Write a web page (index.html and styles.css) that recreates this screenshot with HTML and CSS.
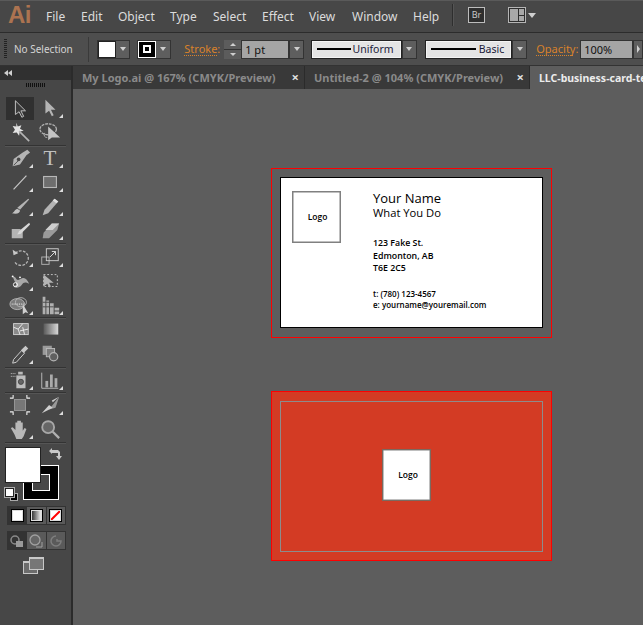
FILE: index.html
```html
<!DOCTYPE html>
<html lang="en">
<head>
<meta charset="utf-8">
<title>Adobe Illustrator</title>
<link rel="stylesheet" href="styles.css">
</head>
<body>
<div class="app">
  <header class="menubar">
    <span class="ai-logo">Ai</span>
    <nav class="menu">
      <span class="m-file">File</span><span class="m-edit">Edit</span><span class="m-object">Object</span><span class="m-type">Type</span><span class="m-select">Select</span><span class="m-effect">Effect</span><span class="m-view">View</span><span class="m-window">Window</span><span class="m-help">Help</span>
    </nav>
    <span class="menu-sep"></span>
    <span class="br-btn">Br</span>
    <span class="ws-btn"><span class="ws-left"></span><span class="ws-right"><i></i><i></i></span></span>
    <span class="tri tri-ws"></span>
  </header>

  <div class="controlbar">
    <span class="grip-v"></span>
    <span class="no-sel">No Selection</span>
    <span class="ctl-sep"></span>
    <span class="swatch-combo combo-fill"><span class="sw-fill"></span><span class="drop"><span class="tri"></span></span></span>
    <span class="swatch-combo combo-stroke"><span class="sw-stroke"><i></i></span><span class="drop"><span class="tri"></span></span></span>
    <span class="link-label lbl-stroke">Stroke:</span>
    <span class="spinner"><span class="spin"><span class="tri tri-up"></span></span><span class="spin"><span class="tri"></span></span></span>
    <span class="field field-pt">1 pt</span><span class="drop drop-pt"><span class="tri"></span></span>
    <span class="profile prof-uniform"><span class="line"></span><span>Uniform</span></span><span class="drop drop-p"><span class="tri"></span></span>
    <span class="profile prof-basic"><span class="line"></span><span>Basic</span></span><span class="drop drop-p drop-last"><span class="tri"></span></span>
    <span class="link-label lbl-opacity">Opacity:</span>
    <span class="field field-op">100%</span><span class="drop drop-op"><span class="tri tri-right"></span></span>
  </div>

  <div class="workspace">
    <aside class="toolbox">
      <div class="tb-head"><svg class="collapse" viewBox="0 0 8 6"><path d="M4 0v6L0 3zM8 0v6L4 3z" fill="#cfcfcf"/></svg></div>
      <div class="tb-grip"></div>
      <div class="tools">
        <div class="tool active"><svg viewBox="0 0 24 24"><path d="M7 3v15l4-3 3 6 2-1-3-6h5z" fill="#3a3a3a" stroke="#c8c8c8"/></svg></div>
        <div class="tool fly"><svg viewBox="0 0 24 24"><path d="M7 3v15l4-3 3 6 2-1-3-6h5z" fill="#b4b4b4"/></svg></div>
        <div class="tool"><svg viewBox="0 0 24 24"><path d="M8 2l1.500 4 4-1.500-1.500 4 4 2-4.300 1L11 16l-2.500-3.500-4.500.5 2.500-3.500L4 5.500l4 .5z" fill="#e4e4e4"/><path d="M11 11l11 11" stroke="#b4b4b4" stroke-width="1.800"/></svg></div>
        <div class="tool"><svg viewBox="0 0 24 24"><ellipse cx="10" cy="9" rx="9" ry="6" fill="none" stroke="#b4b4b4" stroke-width="1.400" stroke-dasharray="3 1"/><path d="M9 18c-3 0-4-2-3-5" stroke="#b4b4b4" fill="none"/><path d="M10 6v15l4-3 9 0z" fill="#c4c4c4"/></svg></div>
        <div class="tb-sep"></div>
        <div class="tool fly"><svg viewBox="0 0 24 24"><path d="M20 3l3 3-4 3-7 10-8 2 1-8 10-7z" fill="#b4b4b4"/><circle cx="10.500" cy="13.500" r="2" fill="#474747"/><path d="M5 20l5-5" stroke="#474747"/></svg></div>
        <div class="tool fly"><span class="t-glyph">T</span></div>
        <div class="tool fly"><svg viewBox="0 0 24 24"><path d="M5 20L19 5" stroke="#c8c8c8" stroke-width="1.300"/></svg></div>
        <div class="tool fly"><svg viewBox="0 0 24 24"><rect x="5" y="6" width="14" height="12" fill="#6e6e6e" stroke="#b8b8b8" stroke-width="1.200"/></svg></div>
        <div class="tool fly"><svg viewBox="0 0 24 24"><path d="M21 4l1 1-10 11-3-2z" fill="#b4b4b4"/><path d="M9 15l3 2c0 3-3 4-9 3 3-1 3-4 6-5z" fill="#c0c0c0"/></svg></div>
        <div class="tool fly"><svg viewBox="0 0 24 24"><path d="M17 4l4 3-11 13-6 2 2-6z" fill="#b4b4b4"/><path d="M17 4l4 3-2 2-4-3z" fill="#e0e0e0"/></svg></div>
        <div class="tool"><svg viewBox="0 0 24 24"><path d="M3 11h10l-3 5 5-3v8H3z" fill="#b4b4b4"/><path d="M22 4L11 13l-2 4 4-1L23 6z" fill="#d8d8d8"/></svg></div>
        <div class="tool fly"><svg viewBox="0 0 24 24"><path d="M14 5h8l-2 7-9 9H4l1-6z" fill="#9a9a9a"/><path d="M14 5h8l-7 7H7z" fill="#d0d0d0"/></svg></div>
        <div class="tb-sep"></div>
        <div class="tool fly"><svg viewBox="0 0 24 24"><path d="M7 8a8 8 0 1 1-1 9" fill="none" stroke="#b4b4b4" stroke-width="1.400" stroke-dasharray="3 1.500"/><path d="M4 4l1 6 5-2z" fill="#c8c8c8"/></svg></div>
        <div class="tool fly"><svg viewBox="0 0 24 24"><rect x="3" y="12" width="8" height="8" fill="none" stroke="#b4b4b4"/><rect x="8" y="3" width="13" height="13" fill="none" stroke="#d0d0d0"/><path d="M12 12l6-6M14 6h4v4" stroke="#e0e0e0" fill="none"/></svg></div>
        <div class="tool fly"><svg viewBox="0 0 24 24"><path d="M4 7c5 0 3 6 8 3 5-3 7-1 10 5-4-2-6-2-8 1-3 4-7 4-9 2 4-1 3-4 1-6z" fill="#a8a8a8"/><circle cx="7" cy="16" r="2.200" fill="none" stroke="#fff"/><circle cx="4" cy="7" r="1" fill="#fff"/><circle cx="12" cy="8" r="1" fill="#fff"/></svg></div>
        <div class="tool"><svg viewBox="0 0 24 24"><rect x="5" y="5" width="15" height="13" fill="none" stroke="#c8c8c8" stroke-dasharray="2 2"/><path d="M5 5v13l4-3 2 4 2-1-2-4h5z" fill="#b4b4b4"/></svg></div>
        <div class="tool fly"><svg viewBox="0 0 24 24"><ellipse cx="9" cy="11" rx="8" ry="6" fill="#7c7c7c" stroke="#b4b4b4"/><ellipse cx="13" cy="9" rx="6" ry="5" fill="none" stroke="#b4b4b4"/><path d="M3 11h14" stroke="#fff" stroke-dasharray="1 1"/><path d="M15 11v11l3-2 3 1z" fill="#d0d0d0"/></svg></div>
        <div class="tool fly"><svg viewBox="0 0 24 24"><path d="M4 3h3v19H4zM8 7h3v15H8zM12 10h4v12h-4zM17 15h5v3h-5zM17 19h5v3h-5z" fill="#b0b0b0"/><path d="M4 9h12M4 14h12" stroke="#474747"/></svg></div>
        <div class="tb-sep"></div>
        <div class="tool"><svg viewBox="0 0 24 24"><rect x="5" y="5" width="16" height="12" fill="#8a8a8a" stroke="#d0d0d0"/><path d="M5 9l5 2 2 6M10 11l5-6M12 13l9-2M15 9l2 8" stroke="#eee" fill="none"/></svg></div>
        <div class="tool"><svg viewBox="0 0 24 24"><defs><linearGradient id="g1"><stop offset="0" stop-color="#5a5a5a"/><stop offset="1" stop-color="#d8d8d8"/></linearGradient></defs><rect x="5" y="5" width="16" height="12" fill="url(#g1)"/></svg></div>
        <div class="tool fly"><svg viewBox="0 0 24 24"><path d="M4 22l1-4 9-10 3 3-9 10z" fill="#474747" stroke="#d8d8d8"/><path d="M13 8l5-5 3 3-5 5z" fill="#c8c8c8"/></svg></div>
        <div class="tool"><svg viewBox="0 0 24 24"><rect x="4" y="3" width="10" height="10" fill="#9a9a9a"/><rect x="8" y="6" width="9" height="9" fill="#7a7a7a" stroke="#bbb"/><circle cx="16" cy="15" r="4.500" fill="#606060" stroke="#b4b4b4" stroke-width="1.300"/></svg></div>
        <div class="tb-sep"></div>
        <div class="tool fly"><svg viewBox="0 0 24 24"><path d="M2 5h6M2 8h6" stroke="#d0d0d0" stroke-dasharray="1 1"/><rect x="10" y="3" width="5" height="3" fill="#bbb"/><rect x="8" y="7" width="10" height="14" fill="#bdbdbd"/><circle cx="13" cy="14" r="2.800" fill="#666" stroke="#444"/></svg></div>
        <div class="tool fly"><svg viewBox="0 0 24 24"><path d="M3 4v17h18" fill="none" stroke="#c0c0c0"/><rect x="7" y="13" width="3" height="7" fill="#aaa"/><rect x="12" y="6" width="3" height="14" fill="#aaa"/><rect x="17" y="10" width="3" height="10" fill="#aaa"/></svg></div>
        <div class="tb-sep"></div>
        <div class="tool"><svg viewBox="0 0 24 24"><rect x="6" y="6" width="12" height="12" fill="#777" stroke="#999"/><path d="M1 4.500h4M19 4.500h4M1 19.500h4M19 19.500h4M4.500 1v3M19.500 1v3M4.500 20v3M19.500 20v3" stroke="#eee" stroke-width="1.200"/></svg></div>
        <div class="tool fly"><svg viewBox="0 0 24 24"><path d="M22 3l-4 12-7 2z" fill="#999"/><path d="M14 7l8-4-7 6z" fill="#ccc"/><path d="M3 21l8-9 4 3z" fill="#d0d0d0"/></svg></div>
        <div class="tool fly"><svg viewBox="0 0 24 24"><path d="M6 18L2 11l2-1 3 3V5h2v6-8h2v8-8h2v8-6h2v9l2-3 2 1-3 8-2 3H8z" fill="#b8b8b8"/></svg></div>
        <div class="tool"><svg viewBox="0 0 24 24"><circle cx="10" cy="10" r="6.500" fill="#666" stroke="#a8a8a8" stroke-width="2"/><path d="M15 15l7 7" stroke="#b0b0b0" stroke-width="2.500"/></svg></div>
        <div class="tb-sep"></div>
      </div>

      <div class="colors">
        <span class="big-stroke"><i></i></span>
        <span class="big-fill"></span>
        <svg class="swap" viewBox="0 0 14 14"><path d="M1 4l3-3v2h6l2 2v4h2l-3 4-3-4h2V6H4v1z" fill="#c8c8c8"/></svg>
        <span class="mini-default"><i></i><b></b></span>
      </div>
      <div class="btn-row">
        <span class="mode on"><span class="m-color"></span></span>
        <span class="mode"><span class="m-grad"></span></span>
        <span class="mode"><span class="m-none"><svg viewBox="0 0 11 11"><path d="M0 11L11 0" stroke="#f00" stroke-width="2"/></svg></span></span>
      </div>
      <div class="btn-row draw-row">
        <span class="mode on"><svg viewBox="0 0 14 14"><circle cx="5" cy="6" r="4" fill="none" stroke="#8a8a8a" stroke-width="1.500"/><rect x="6" y="7" width="7" height="6" fill="#9a9a9a"/></svg></span>
        <span class="mode"><svg viewBox="0 0 14 14"><circle cx="6" cy="6" r="5" fill="#666" stroke="#a0a0a0" stroke-width="1.300"/><path d="M7 13h6V8" stroke="#a0a0a0" fill="none"/></svg></span>
        <span class="mode"><svg viewBox="0 0 14 14"><path d="M7 2a5 5 0 1 0 5 5H8V5" fill="none" stroke="#7e7e7e" stroke-width="1.500"/></svg></span>
      </div>
      <div class="screen-mode"><span class="sm-back"></span><span class="sm-front"></span></div>
    </aside>

    <main class="doc">
      <div class="tabs">
        <div class="tab tab-1"><span class="tab-title">My Logo.ai @ 167% (CMYK/Preview)</span><span class="x">×</span></div>
        <div class="tab tab-2"><span class="tab-title">Untitled-2 @ 104% (CMYK/Preview)</span><span class="x">×</span></div>
        <div class="tab tab-3"><span class="tab-title">LLC-business-card-te</span></div>
      </div>
      <div class="canvas">
        <section class="bleed front">
          <div class="card card-front">
            <div class="logo-box">Logo</div>
            <div class="details">
              <div class="name">Your Name</div>
              <div class="role">What You Do</div>
              <div class="addr">123 Fake St.<br>Edmonton, AB<br>T6E 2C5</div>
              <div class="contact">t: (780) 123-4567<br>e: yourname@youremail.com</div>
            </div>
          </div>
        </section>
        <section class="bleed back">
          <div class="card card-back">
            <div class="logo-box logo-back">Logo</div>
          </div>
        </section>
      </div>
    </main>
  </div>
</div>
</body>
</html>
```
FILE: styles.css
```css
* { box-sizing: border-box; }
html, body { margin: 0; height: 100%; overflow: hidden; }
body { background: #5d5d5d; font-family: "Noto Sans", "Open Sans", sans-serif; color: #d8d8d8; }
i, b { display: block; font-style: normal; }
.app { width: 643px; height: 625px; display: flex; flex-direction: column; overflow: hidden; }

/* menu bar */
.menubar { height: 33px; flex: none; display: flex; align-items: center; background: #474747; border-bottom: 1px solid #2c2c2c; padding-left: 8px; box-shadow: inset 0 1px 0 #5a5a5a; }
.ai-logo { width: 38px; font: bold 24px/1 "Liberation Sans", sans-serif; color: #ac7350; letter-spacing: -0.5px; margin-top: -3px; }
.menu { display: flex; font-size: 12px; color: #dcdcdc; width: 406px; }
.menu span { display: block; }
.m-file { width: 35px; } .m-edit { width: 37px; } .m-object { width: 52px; } .m-type { width: 43px; }
.m-select { width: 49px; } .m-effect { width: 47px; } .m-view { width: 43px; } .m-window { width: 61px; }
.menu-sep { width: 1px; height: 22px; background: #2e2e2e; box-shadow: 1px 0 0 #555; margin-right: 15px; margin-top: -2px; }
.br-btn { width: 17px; height: 16px; border: 1px solid #bdbdbd; background: #2e2e2e; color: #c8c8c8; font-size: 9px; line-height: 14px; text-align: center; margin-top: -2px; margin-right: 23px; }
.ws-btn { width: 18px; height: 16px; border: 1px solid #b5b5b5; background: #2e2e2e; display: flex; gap: 1px; margin-top: -2px; padding: 1px; }
.ws-left { width: 8px; background: #a8a8a8; }
.ws-right { flex: 1; display: flex; flex-direction: column; gap: 1px; }
.ws-right i { flex: 1; background: #a8a8a8; }
.tri { display: block; width: 0; height: 0; border-left: 4px solid transparent; border-right: 4px solid transparent; border-top: 5px solid #cfcfcf; }
.tri-up { border-top: 0; border-bottom: 4px solid #cfcfcf; }
.tri-right { border: 0; border-top: 4px solid transparent; border-bottom: 4px solid transparent; border-left: 5px solid #cfcfcf; }
.tri-ws { margin-left: 2px; margin-top: -2px; }

/* control bar */
.controlbar { height: 33px; flex: none; display: flex; align-items: center; background: #4e4e4e; border-bottom: 1px solid #333; padding: 0 0 0 4px; font-size: 11px; overflow: hidden; }
.grip-v { width: 3px; height: 20px; background: repeating-linear-gradient(#222 0 1px, transparent 1px 2px); margin-right: 7px; }
.no-sel { width: 74px; font-size: 10px; color: #d4d4d4; }
.ctl-sep { width: 1px; height: 25px; background: #3a3a3a; margin-right: 8px; }
.swatch-combo { display: flex; height: 19px; width: 34px; margin-right: 7px; background: #333; padding: 1px; }
.combo-fill { margin-right: 7px; }
.combo-stroke { width: 34px; margin-right: 13px; }
.sw-fill { width: 18px; background: #fff; border: 1px solid #222; }
.sw-stroke { width: 18px; background: #000; border: 1px solid #fff; display: flex; align-items: center; justify-content: center; }
.sw-stroke i { width: 8px; height: 8px; border: 2px solid #fff; }
.drop { display: flex; align-items: center; justify-content: center; flex: 1; height: 100%; background: #5e5e5e; }
.drop .tri { border-left-width: 3.500px; border-right-width: 3.500px; border-top-width: 4px; }
.link-label { color: #d9822b; border-bottom: 1px dotted #d9822b; font-size: 11px; line-height: 13px; }
.lbl-stroke { width: 33px; margin-right: 7px; white-space: nowrap; }
.spinner { width: 17px; height: 19px; display: flex; flex-direction: column; gap: 1px; background: #333; }
.spin { flex: 1; display: flex; align-items: center; justify-content: center; background: #5c5c5c; }
.spin .tri { border-left-width: 3px; border-right-width: 3px; border-top-width: 3px; }
.spin .tri-up { border-bottom-width: 3px; border-top-width: 0; }
.field { height: 19px; background: #a5a5a5; color: #111; font-size: 11px; line-height: 18px; padding-left: 3px; border: 1px solid #333; }
.field-pt { width: 48px; }
.drop-pt { flex: none; width: 15px; height: 19px; margin-right: 7px; border: 1px solid #333; }
.profile { height: 19px; background: #e4e4e4; border: 1px solid #222; display: flex; align-items: center; justify-content: space-between; color: #1a1a3a; font-size: 10.500px; padding: 0 7px 0 5px; box-shadow: inset 0 0 0 1px #f4f4f4; }
.prof-uniform { width: 91px; }
.prof-basic { width: 88px; }
.line { height: 2px; background: #000; }
.prof-uniform .line { width: 34px; }
.prof-basic .line { width: 45px; }
.drop-p { flex: none; width: 15px; height: 19px; margin-right: 8px; border: 1px solid #333; }
.drop-last { margin-right: 9px; }
.lbl-opacity { width: 37px; margin-right: 7px; white-space: nowrap; }
.field-op { width: 53px; }
.drop-op { flex: none; width: 10px; height: 19px; border: 1px solid #333; }

/* workspace */
.workspace { flex: 1; display: flex; min-height: 0; }
.toolbox { width: 73px; flex: none; background: #474747; border-right: 2px solid #2b2b2b; display: flex; flex-direction: column; }
.tb-head { height: 14px; background: #303030; padding: 4px 0 0 4px; }
.collapse { display: block; width: 8px; height: 6px; }
.tb-grip { height: 16px; padding-top: 2px; background: linear-gradient(#111, #111) center 3px / 20px 4px no-repeat; background-image: repeating-linear-gradient(90deg, #111 0 1px, transparent 1px 2px); }
.tools { display: grid; grid-template-columns: 30px 30px; grid-auto-rows: 24px; padding-left: 5px; }
.tb-sep { grid-column: 1 / -1; height: 1px; background: #333; box-shadow: 0 1px 0 #555; margin: 0 -1px 0 0; align-self: center; height: 1px; }
.tools { grid-template-rows: 24px 24px 2px 24px 24px 24px 24px 2px 25px 24px 24px 1px 24px 24px 2px 24px 1px 24px 24px 2px; }
.tool { position: relative; display: flex; align-items: center; justify-content: center; }
.tool svg { width: 22px; height: 22px; }
.tool.active { background: #303030; margin: 1px 1px 0; }
.fly::after { content: ""; position: absolute; right: 2px; bottom: 2px; width: 0; height: 0; border-left: 4px solid transparent; border-bottom: 4px solid #dcdcdc; }
.t-glyph { font: 21px/24px "Liberation Serif", serif; color: #c0c0c0; }

.colors { position: relative; height: 60px; margin-top: 3px; flex: none; }
.big-fill { position: absolute; left: 5px; top: 1px; width: 36px; height: 36px; background: #fff; border: 1px solid #222; }
.big-stroke { position: absolute; left: 23px; top: 19px; width: 36px; height: 35px; background: #000; border: 1px solid #fff; padding: 7px; }
.big-stroke i { border: 1px solid #fff; background: #474747; margin: 1px; width: 18px; height: 17px; }
.swap { position: absolute; left: 48px; top: 1px; width: 14px; height: 14px; }
.mini-default { position: absolute; left: 5px; top: 42px; width: 13px; height: 13px; }
.mini-default i { position: absolute; left: 0; top: 0; width: 9px; height: 9px; background: #fff; border: 1px solid #222; outline: 1px solid #aaa; z-index: 1; }
.mini-default b { position: absolute; right: 0; bottom: 0; width: 8px; height: 8px; background: #000; border: 1px solid #aaa; }

.btn-row { display: flex; height: 19px; margin: 0 0 0 7px; width: 59px; background: #333; gap: 1px; padding: 1px; flex: none; }
.draw-row { margin-top: 6px; }
.mode { flex: 1; display: flex; align-items: center; justify-content: center; background: #5a5a5a; }
.mode.on { background: #333; }
.mode svg { width: 14px; height: 14px; }
.m-color, .m-grad, .m-none { width: 13px; height: 13px; border: 1px solid #000; outline: 1px solid #ddd; outline-offset: -2px; }
.m-color { background: #fff; }
.m-grad { background: linear-gradient(90deg, #222, #fff); }
.m-none { background: #fff; }
.m-none svg { display: block; width: 11px; height: 11px; }
.screen-mode { position: relative; height: 18px; margin-top: 7px; flex: none; }
.sm-back { position: absolute; left: 23px; top: 4px; width: 15px; height: 13px; background: #6c6c6c; border: 1px solid #c8c8c8; border-top-width: 2px; }
.sm-front { position: absolute; left: 29px; top: 0; width: 15px; height: 13px; background: #777; border: 1px solid #c8c8c8; border-top-width: 2px; }

/* document */
.doc { flex: 1; min-width: 0; display: flex; flex-direction: column; }
.tabs { height: 23px; flex: none; display: flex; background: #2f2f2f; font-size: 11px; font-weight: 700; overflow: hidden; }
.tab { flex: none; display: flex; align-items: center; padding-left: 9px; position: relative; background: #393939; color: #8a8a8a; white-space: nowrap; border-right: 1px solid #2b2b2b; }
.tab-1 { width: 232px; }
.tab-2 { width: 225px; }
.tab-3 { flex: 1; background: #5d5d5d; color: #ececec; border: 0; font-size: 10.500px; }
.x { position: absolute; right: 5px; top: 4px; color: #dedede; font-size: 13px; line-height: 14px; }
.canvas { flex: 1; background: #5d5d5d; padding: 79px 0 0 198px; display: flex; flex-direction: column; gap: 53px; }

.bleed { width: 281px; height: 170px; border: 1px solid #f00; padding: 8px; flex: none; }
.front { background: #5d5d5d; }
.back { background: #d33b24; padding: 9px 8px; }
.card { width: 263px; height: 151px; }
.card-front { background: #fff; border: 1px solid #000; display: flex; padding: 13px 0 0 11px; color: #000; }
.card-back { border: 1px solid #8c8c8c; display: flex; align-items: center; justify-content: center; padding: 0 10px 3px 0; }
.logo-box { width: 49px; height: 52px; border: 1px solid #808080; display: flex; align-items: center; justify-content: center; padding: 0 0 2px 2px; font: 600 8.500px "Open Sans", sans-serif; color: #000; background: #fff; flex: none; box-shadow: inset 0 0 0 0.5px #808080; }
.logo-back { padding-left: 3px; border-color: #7a6a60; }
.details { margin-left: 32px; font-family: "Open Sans", sans-serif; color: #000; }
.name { font-size: 13px; line-height: 15px; font-weight: 500; }
.role { font-size: 11.200px; line-height: 14px; font-weight: 500; }
.addr { font-size: 8.800px; line-height: 12.500px; margin-top: 17px; font-weight: 600; }
.contact { font-size: 8px; line-height: 11px; margin-top: 13px; font-weight: 600; }
```
